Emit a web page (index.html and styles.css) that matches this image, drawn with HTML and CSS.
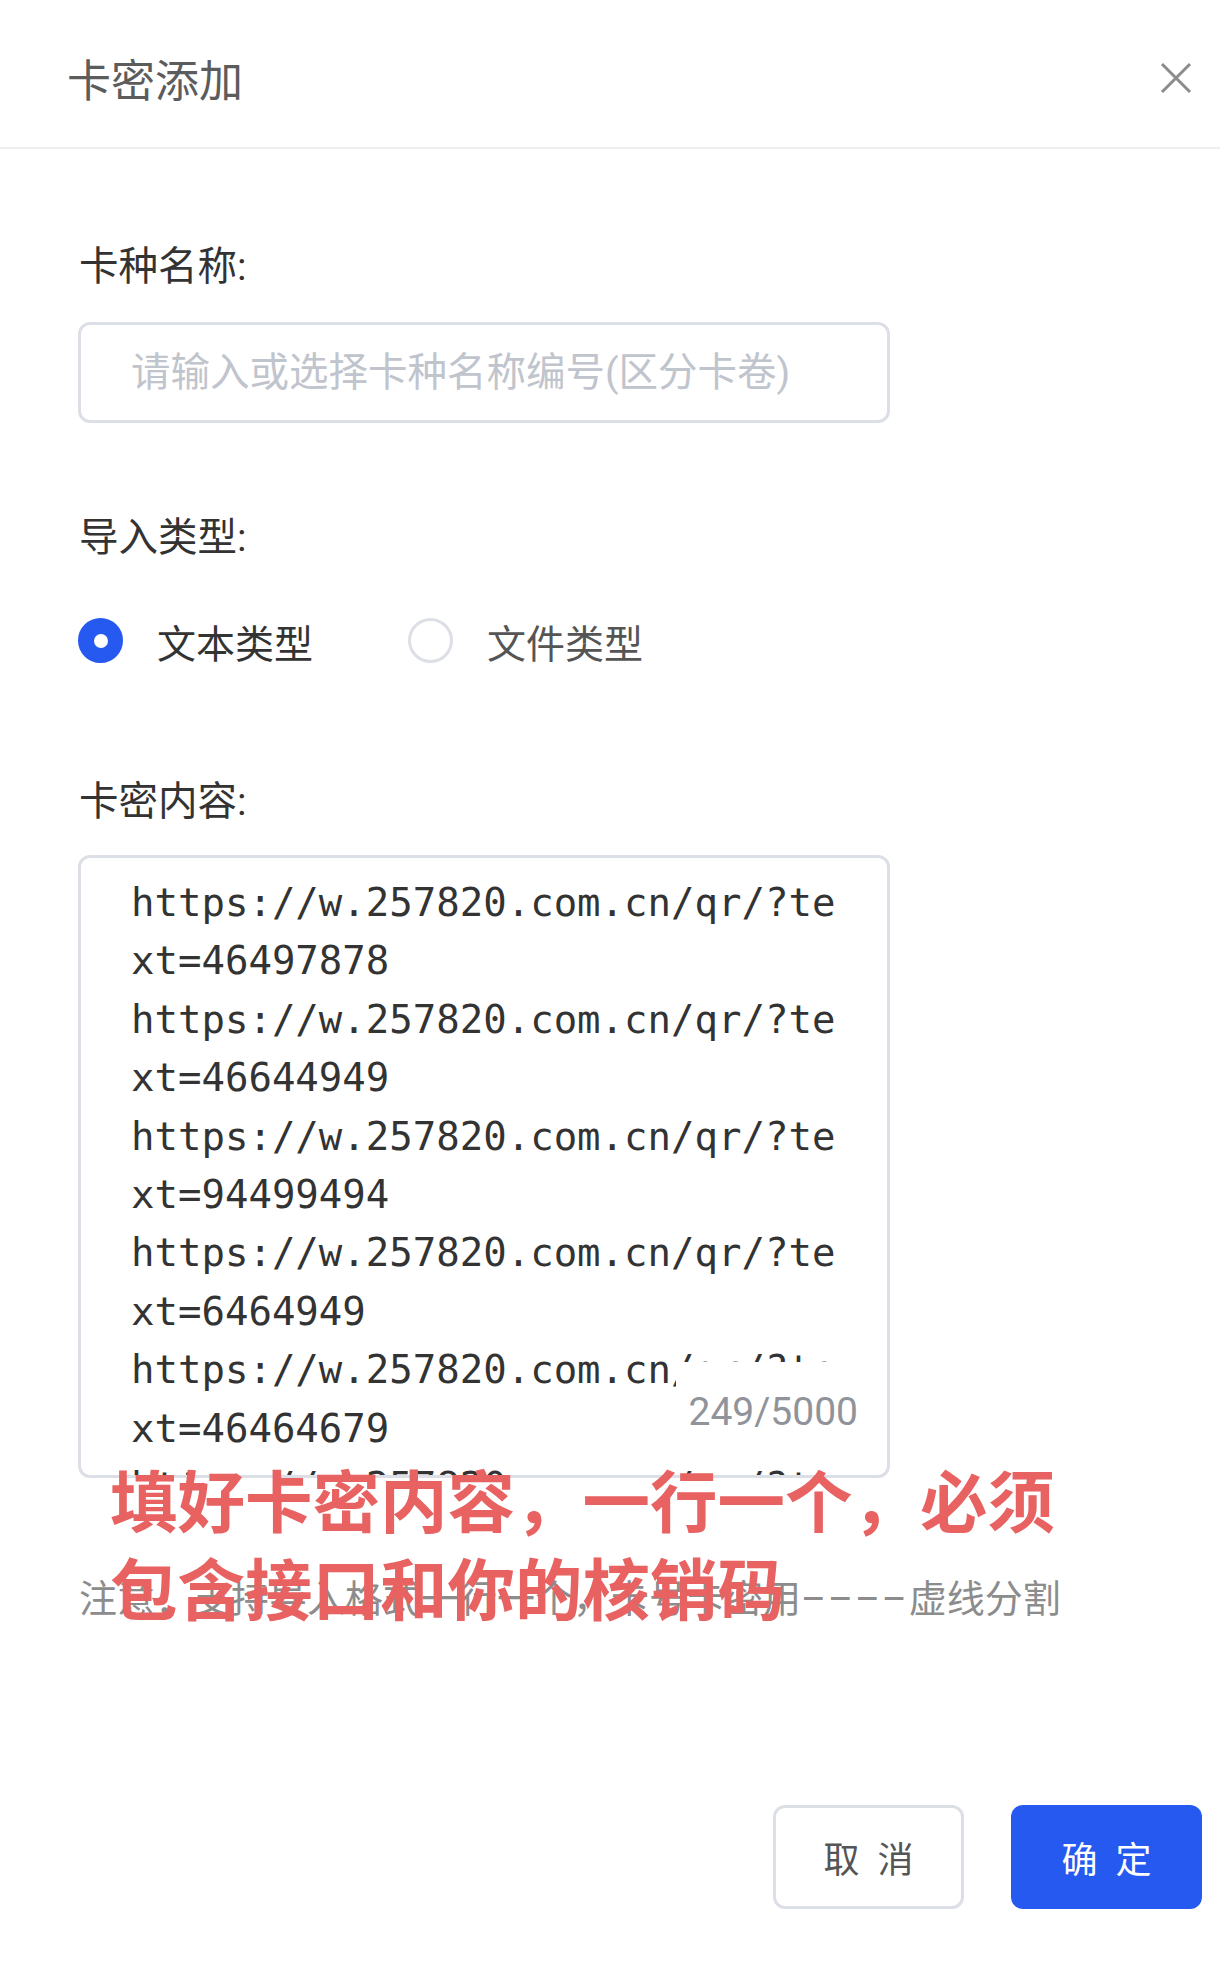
FILE: index.html
```html
<!DOCTYPE html>
<html lang="zh-CN">
<head>
    <meta charset="UTF-8">
    <meta name="viewport" content="width=device-width, initial-scale=1.0">
    <title>卡密添加</title>
    <link rel="stylesheet" href="styles.css">
</head>
<body>
    <div class="modal">
        <div class="modal-header">
            <span class="modal-title">卡密添加</span>
            <button class="modal-close" type="button" aria-label="关闭">
                <svg width="32" height="32" viewBox="0 0 32 32">
                    <path d="M2 2 L30 30 M30 2 L2 30" stroke="#8c8c8c" stroke-width="3" fill="none"/>
                </svg>
            </button>
        </div>

        <div class="modal-body">
            <div class="form-item">
                <label class="form-label" for="card-type">卡种名称:</label>
                <input class="form-input" id="card-type" type="text" placeholder="请输入或选择卡种名称编号(区分卡卷)">
            </div>

            <div class="form-item item-import">
                <label class="form-label">导入类型:</label>
                <div class="radio-group">
                    <label class="radio is-checked">
                        <span class="radio-inner"></span>
                        <span class="radio-text">文本类型</span>
                    </label>
                    <label class="radio">
                        <span class="radio-inner"></span>
                        <span class="radio-text">文件类型</span>
                    </label>
                </div>
            </div>

            <div class="form-item item-content">
                <label class="form-label" for="card-content">卡密内容:</label>
                <div class="textarea-wrap">
                    <textarea class="form-textarea" id="card-content">https://w.257820.com.cn/qr/?text=46497878
https://w.257820.com.cn/qr/?text=46644949
https://w.257820.com.cn/qr/?text=94499494
https://w.257820.com.cn/qr/?text=6464949
https://w.257820.com.cn/qr/?text=46464679
https://w.257820.com.cn/qr/?text=4649467</textarea>
                    <span class="word-count">249/5000</span>
                </div>
            </div>

            <p class="form-tip">注意：支持导入格式一行一个，卡号卡密用<span class="tip-dash">––––</span>虚线分割</p>
        </div>

        <div class="modal-footer">
            <button class="btn btn-cancel" type="button">取 消</button>
            <button class="btn btn-primary" type="button">确 定</button>
        </div>

        <div class="hint-mark">填好卡密内容，一行一个，必须<br>包含接口和你的核销码</div>
    </div>
</body>
</html>
```

FILE: styles.css
```css
:root {
    --primary-color: #2659f0;
    --border-color: #dcdfe6;
    --text-color: #333;
    --muted-color: #909399;
}

* {
    margin: 0;
    padding: 0;
    box-sizing: border-box;
}

body {
    font-family: Roboto, "Noto Sans CJK SC", sans-serif;
    color: var(--text-color);
    background-color: #fff;
}

.modal {
    position: relative;
    min-height: 1975px;
    background-color: #fff;
}

.modal-header {
    display: flex;
    align-items: center;
    justify-content: space-between;
    height: 149px;
    padding: 9px 28px 0 67px;
    border-bottom: 2px solid #efefef;
}

.modal-title {
    font-size: 44px;
    color: #5c5c5c;
}

.modal-close {
    display: flex;
    border: none;
    background: none;
    cursor: pointer;
}

.modal-body {
    padding: 91px 0 0 78px;
}

.form-label {
    display: block;
    padding-left: 1px;
    font-size: 39.5px;
    line-height: 54px;
    color: var(--text-color);
}

.form-input {
    display: block;
    width: 812px;
    height: 101px;
    margin-top: 28px;
    padding: 0 20px 0 50px;
    border: 3px solid var(--border-color);
    border-radius: 12px;
    font-family: Roboto, "Noto Sans CJK SC", sans-serif;
    font-size: 39.5px;
    color: var(--text-color);
    outline: none;
}

.form-input::placeholder {
    color: #c0c4cc;
}

.item-import {
    margin-top: 88px;
}

.radio-group {
    display: flex;
    align-items: center;
    height: 45px;
    margin-top: 53px;
}

.radio {
    display: flex;
    align-items: center;
    gap: 34px;
    margin-right: 95px;
    cursor: pointer;
}

.radio-inner {
    display: flex;
    align-items: center;
    justify-content: center;
    width: 45px;
    height: 45px;
    border: 3px solid var(--border-color);
    border-radius: 50%;
}

.radio-text {
    font-size: 39px;
    color: #555;
}

.radio.is-checked .radio-inner {
    background-color: var(--primary-color);
    border-color: var(--primary-color);
}

.radio.is-checked .radio-inner::after {
    content: '';
    width: 14px;
    height: 14px;
    border-radius: 50%;
    background-color: #fff;
}

.radio.is-checked .radio-text {
    color: var(--text-color);
}

.item-content {
    margin-top: 112px;
}

.textarea-wrap {
    position: relative;
    width: 812px;
    margin-top: 26px;
}

.form-textarea {
    display: block;
    width: 812px;
    height: 623px;
    padding: 16px 44px 0 50px;
    border: 3px solid var(--border-color);
    border-radius: 12px;
    font-family: "DejaVu Sans Mono", monospace;
    font-size: 39px;
    line-height: 58.4px;
    color: var(--text-color);
    word-break: break-all;
    overflow: hidden;
    resize: none;
    outline: none;
}

.word-count {
    position: absolute;
    right: 20px;
    bottom: 16px;
    height: 100px;
    padding: 0 12px 0 12px;
    line-height: 100px;
    font-size: 39px;
    color: var(--muted-color);
    background-color: #fff;
}

.form-tip {
    margin-top: 94px;
    padding-left: 1px;
    font-size: 38px;
    line-height: 54px;
    color: #8c8c8c;
}

.tip-dash {
    letter-spacing: 2px;
}

.modal-footer {
    display: flex;
    justify-content: flex-end;
    gap: 47px;
    margin-top: 179px;
    padding-right: 18px;
}

.btn {
    width: 191px;
    height: 104px;
    border-radius: 12px;
    font-family: Roboto, "Noto Sans CJK SC", sans-serif;
    font-size: 36px;
    word-spacing: 9px;
    cursor: pointer;
}

.btn-cancel {
    border: 3px solid var(--border-color);
    background-color: #fff;
    color: #555;
}

.btn-primary {
    border: none;
    background-color: var(--primary-color);
    color: #fff;
}

/* red note laid over the form */
.hint-mark {
    position: absolute;
    top: 1454px;
    left: 110px;
    font-family: "Noto Sans CJK SC", sans-serif;
    font-size: 67.5px;
    font-weight: 700;
    line-height: 88px;
    color: #e86262;
    pointer-events: none;
}
```
